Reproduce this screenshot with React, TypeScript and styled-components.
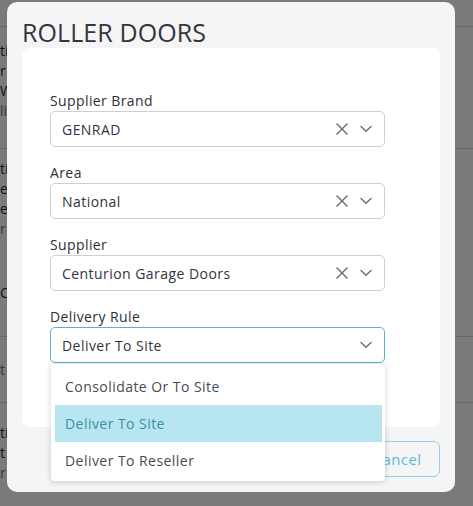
import React from "react";
import styled, { createGlobalStyle } from "styled-components";

const GlobalStyle = createGlobalStyle`
  html, body { margin: 0; padding: 0; }
  body { font-family: "Open Sans", "Noto Sans", sans-serif; }
  * { box-sizing: border-box; }
`;

const Page = styled.div`
  position: relative;
  width: 473px;
  height: 506px;
  overflow: hidden;
  background: #ffffff;
`;

const BgList = styled.div`
  display: flex;
  flex-direction: column;
`;

const BgRow = styled.div<{ $h: number; $line?: boolean }>`
  height: ${(p) => p.$h}px;
  border-bottom: ${(p) => (p.$line ? "1px solid #d8d8d8" : "none")};
  display: flex;
  flex-direction: column;
  justify-content: center;
  font-size: 14px;
  line-height: 20px;
`;

const BgText = styled.span<{ $c?: string }>`
  white-space: nowrap;
  color: ${(p) => p.$c || "#1a2a4a"};
`;

const Overlay = styled.div`
  position: absolute;
  inset: 0;
  background: rgba(0, 0, 0, 0.52);
`;

const Modal = styled.div`
  position: absolute;
  left: 7px;
  top: 2px;
  width: 448px;
  height: 490px;
  background: #f5f5f5;
  border-radius: 10px;
  display: flex;
  flex-direction: column;
  padding: 0 15px;
`;

const Title = styled.h2`
  margin: 0;
  padding-top: 14px;
  height: 46px;
  font-size: 25px;
  line-height: 32px;
  font-weight: 400;
  color: #343440;
  letter-spacing: 0.1px;
`;

const Card = styled.div`
  background: #ffffff;
  border-radius: 8px;
  height: 379px;
  padding: 43px 55px 0 28px;
  display: flex;
  flex-direction: column;
  gap: 16px;
`;

const Field = styled.div`
  position: relative;
  display: flex;
  flex-direction: column;
`;

const Label = styled.label`
  font-size: 14px;
  line-height: 20px;
  height: 20px;
  font-weight: 500;
  color: #2e2e36;
  letter-spacing: 0.4px;
`;

const Control = styled.div<{ $focused?: boolean }>`
  height: 36px;
  border: 1px solid ${(p) => (p.$focused ? "#5aaed3" : "#cfcfcf")};
  border-radius: 5px;
  display: flex;
  align-items: center;
  padding: 0 8px 0 11px;
  background: #fff;
`;

const Value = styled.span`
  flex: 1;
  font-size: 14px;
  color: #33333b;
  letter-spacing: 0.45px;
`;

const IconBtn = styled.span`
  display: flex;
  align-items: center;
  justify-content: center;
  width: 20px;
  height: 20px;
  margin-left: 4px;
  color: #666670;
`;

const Menu = styled.div`
  position: absolute;
  top: calc(100% + 1px);
  left: 1px;
  right: 0;
  background: #fff;
  border-radius: 4px;
  box-shadow: 0 1px 6px rgba(0, 0, 0, 0.18);
  padding: 4px 3px 2px 4px;
  display: flex;
  flex-direction: column;
  z-index: 5;
`;

const Option = styled.div<{ $active?: boolean }>`
  height: 37px;
  display: flex;
  align-items: center;
  padding-left: 10px;
  font-size: 14px;
  letter-spacing: 0.45px;
  color: ${(p) => (p.$active ? "#3f8ea2" : "#4a4a52")};
  background: ${(p) => (p.$active ? "#b8e6f0" : "transparent")};
`;

const Footer = styled.div`
  display: flex;
  justify-content: flex-end;
  margin-top: 14px;
`;

const CancelButton = styled.button`
  height: 36px;
  width: 86px;
  border: 1px solid #8fd3e6;
  border-radius: 6px;
  background: transparent;
  color: #5bbcd8;
  font-family: inherit;
  font-size: 15px;
  letter-spacing: 0.4px;
`;

const ClearIcon = () => (
  <svg width="12" height="12" viewBox="0 0 12 12" fill="none">
    <path d="M1 1L11 11M11 1L1 11" stroke="currentColor" strokeWidth="1.4" strokeLinecap="round" />
  </svg>
);

const ChevronIcon = () => (
  <svg width="12" height="8" viewBox="0 0 12 8" fill="none">
    <path d="M1 1.5L6 6.2L11 1.5" stroke="currentColor" strokeWidth="1.3" strokeLinecap="round" strokeLinejoin="round" />
  </svg>
);

type FieldDef = { label: string; value: string; clearable: boolean; focused?: boolean };

const fields: FieldDef[] = [
  { label: "Supplier Brand", value: "GENRAD", clearable: true },
  { label: "Area", value: "National", clearable: true },
  { label: "Supplier", value: "Centurion Garage Doors", clearable: true },
  { label: "Delivery Rule", value: "Deliver To Site", clearable: false, focused: true },
];

const options = ["Consolidate Or To Site", "Deliver To Site", "Deliver To Reseller"];

export default function App() {
  return (
    <>
      <GlobalStyle />
      <Page>
        <BgList>
          <BgRow $h={27} $line />
          <BgRow $h={108}>
            <BgText>ti</BgText>
            <BgText>r</BgText>
            <BgText>W</BgText>
            <BgText $c="#777">li</BgText>
          </BgRow>
          <BgRow $h={14} $line />
          <BgRow $h={100}>
            <BgText>ti</BgText>
            <BgText>e</BgText>
            <BgText>e</BgText>
            <BgText $c="#777">r</BgText>
          </BgRow>
          <BgRow $h={88} $line><BgText>C</BgText></BgRow>
          <BgRow $h={66} $line><BgText $c="#777">t</BgText></BgRow>
          <BgRow $h={100}>
            <BgText>ti</BgText>
            <BgText>t</BgText>
            <BgText $c="#777">r</BgText>
          </BgRow>
        </BgList>
        <Overlay />
        <Modal>
          <Title>ROLLER DOORS</Title>
          <Card>
            {fields.map((f) => (
              <Field key={f.label}>
                <Label>{f.label}</Label>
                <Control $focused={f.focused}>
                  <Value>{f.value}</Value>
                  {f.clearable && (
                    <IconBtn>
                      <ClearIcon />
                    </IconBtn>
                  )}
                  <IconBtn>
                    <ChevronIcon />
                  </IconBtn>
                </Control>
                {f.focused && (
                  <Menu>
                    {options.map((o) => (
                      <Option key={o} $active={o === f.value}>
                        {o}
                      </Option>
                    ))}
                  </Menu>
                )}
              </Field>
            ))}
          </Card>
          <Footer>
            <CancelButton>Cancel</CancelButton>
          </Footer>
        </Modal>
      </Page>
    </>
  );
}
